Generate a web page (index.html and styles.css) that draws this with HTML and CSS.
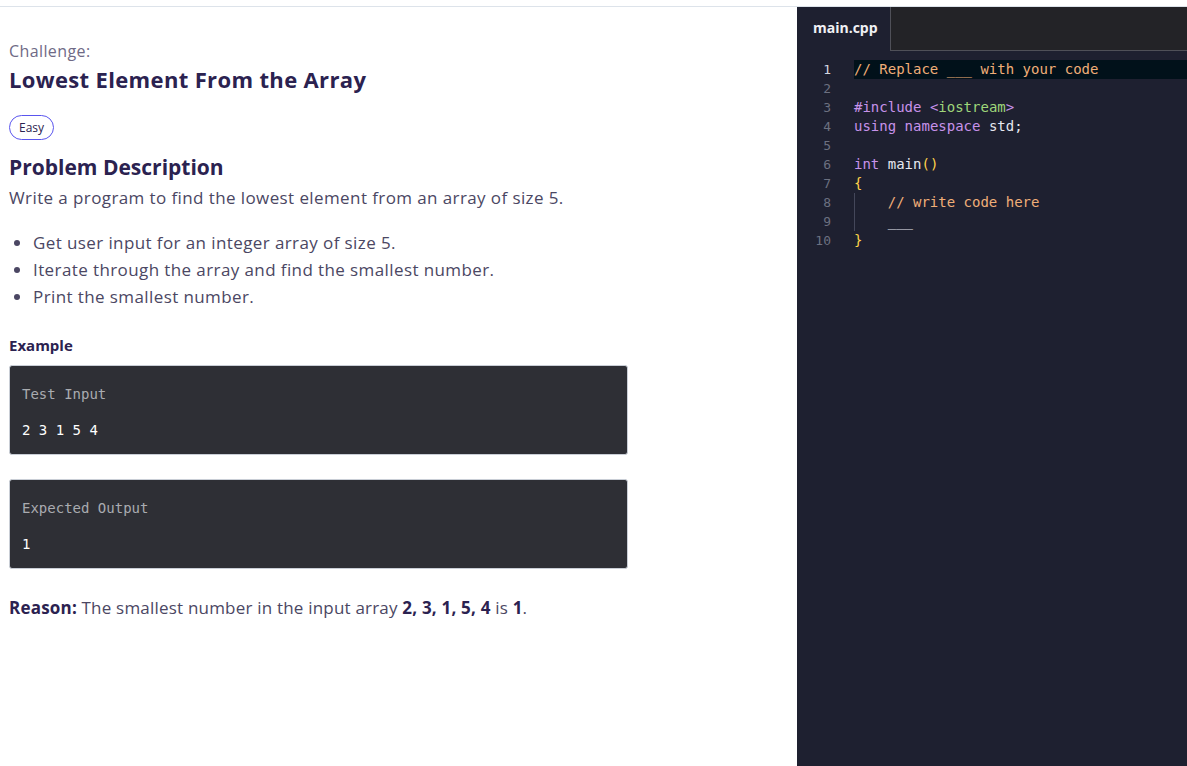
FILE: index.html
```html
<!DOCTYPE html>
<html lang="en">
<head>
<meta charset="utf-8">
<title>Lowest Element From the Array</title>
<link rel="stylesheet" href="styles.css">
</head>
<body>
<div class="app">
  <section class="problem">
    <div class="eyebrow">Challenge:</div>
    <h1 class="title">Lowest Element From the Array</h1>
    <span class="badge">Easy</span>
    <h2 class="section-title">Problem Description</h2>
    <p class="text">Write a program to find the lowest element from an array of size 5.</p>
    <ul class="list">
      <li>Get user input for an integer array of size 5.</li>
      <li>Iterate through the array and find the smallest number.</li>
      <li>Print the smallest number.</li>
    </ul>
    <h3 class="example-title">Example</h3>
    <div class="io-box">
      <div class="io-label">Test Input</div>
      <div class="io-value">2 3 1 5 4</div>
    </div>
    <div class="io-box">
      <div class="io-label">Expected Output</div>
      <div class="io-value">1</div>
    </div>
    <p class="text reason"><b>Reason:</b> The smallest number in the input array <b>2, 3, 1, 5, 4</b> is <b>1</b>.</p>
  </section>
  <section class="editor">
    <div class="tabs">
      <div class="tab">main.cpp</div>
      <div class="tab-rest"></div>
    </div>
    <div class="code">
      <div class="gutter">
        <div class="ln active">1</div>
        <div class="ln">2</div>
        <div class="ln">3</div>
        <div class="ln">4</div>
        <div class="ln">5</div>
        <div class="ln">6</div>
        <div class="ln">7</div>
        <div class="ln">8</div>
        <div class="ln">9</div>
        <div class="ln">10</div>
      </div>
      <div class="lines">
        <div class="line current"><span class="c">// Replace ___ with your code</span></div>
        <div class="line"> </div>
        <div class="line"><span class="k">#include</span> <span class="k">&lt;</span><span class="s">iostream</span><span class="k">&gt;</span></div>
        <div class="line"><span class="k">using</span> <span class="k">namespace</span> <span class="p">std;</span></div>
        <div class="line"> </div>
        <div class="line"><span class="k">int</span> <span class="p">main</span><span class="y">()</span></div>
        <div class="line"><span class="y">{</span></div>
        <div class="line indent"><span class="guide"></span><span class="c">    // write code here</span></div>
        <div class="line indent"><span class="guide"></span><span class="p">    ___</span></div>
        <div class="line"><span class="y">}</span></div>
      </div>
    </div>
  </section>
</div>
</body>
</html>
```

FILE: styles.css
```css
* { box-sizing: border-box; }
html, body { margin: 0; padding: 0; background: #ffffff; }
body {
  padding-top: 6px;
  font-family: "Open Sans", "Noto Sans", sans-serif;
  color: #2b2250;
}
.app {
  display: flex;
  height: 760px;
  border-top: 1px solid #dde3ea;
}
.problem {
  width: 797px;
  padding: 34px 9px 0 9px;
}
.eyebrow {
  font-size: 16px;
  letter-spacing: 0.4px;
  color: #6f6a86;
  line-height: 20px;
}
.title {
  margin: 3px 0 0;
  font-size: 22px;
  letter-spacing: 0.35px;
  font-weight: 700;
  line-height: 30px;
  color: #2b2250;
}
.badge {
  display: inline-block;
  margin-top: 21px;
  padding: 0 9px;
  height: 25px;
  line-height: 23px;
  border: 1px solid #5a55ee;
  border-radius: 13px;
  font-size: 12px;
  color: #2b2250;
}
.section-title {
  margin: 13px 0 0;
  font-size: 21px;
  font-weight: 700;
  line-height: 28px;
}
.text {
  margin: 5px 0 0;
  font-size: 17px;
  letter-spacing: 0.4px;
  line-height: 24px;
  color: #4b4763;
}
.list {
  margin: 19px 0 0;
  padding-left: 24px;
  font-size: 17px;
  letter-spacing: 0.4px;
  line-height: 27px;
  color: #4b4763;
}
.example-title {
  margin: 25px 0 0;
  font-size: 15px;
  font-weight: 700;
  line-height: 20px;
}
.io-box {
  width: 619px;
  height: 90px;
  margin-top: 10px;
  padding: 19px 12px 0;
  background: #2e2f35;
  border: 1px solid #c9ced6;
  border-radius: 3px;
  font-family: "DejaVu Sans Mono", monospace;
  font-size: 14px;
}
.io-box + .io-box { margin-top: 24px; }
.io-label { color: #a9abb0; line-height: 18px; }
.io-value { color: #ffffff; line-height: 18px; margin-top: 18px; }
.reason { margin-top: 27px; letter-spacing: 0.2px; }
.reason b { color: #2b2250; }

.editor {
  flex: 1;
  background: #1e2030;
  display: flex;
  flex-direction: column;
}
.tabs {
  display: flex;
  height: 44px;
}
.tab {
  width: 93px;
  padding-left: 16px;
  line-height: 42px;
  font-size: 14px;
  font-weight: 700;
  color: #f0f0f4;
}
.tab-rest {
  flex: 1;
  background: #232327;
  border-left: 1px solid #4f5058;
  border-bottom: 1px solid #4f5058;
}
.code {
  display: flex;
  padding-top: 9px;
  font-family: "DejaVu Sans Mono", monospace;
  font-size: 14px;
}
.gutter {
  width: 34px;
  text-align: right;
  color: #6c7080;
}
.ln { height: 19px; line-height: 19px; font-size: 13px; }
.ln.active { color: #d4d6e0; }
.lines { flex: 1; margin-left: 23px; }
.line {
  height: 19px;
  line-height: 19px;
  white-space: pre;
  color: #e6e8f0;
  position: relative;
}
.line.current { background: #01111a; }
.guide {
  position: absolute;
  left: 0;
  top: 0;
  bottom: 0;
  border-left: 1px solid #44475a;
}
.c { color: #f0ae78; }
.k { color: #c792ea; }
.s { color: #9fd67a; }
.y { color: #ffd24a; }
.p { color: #e6e8f0; }
```
